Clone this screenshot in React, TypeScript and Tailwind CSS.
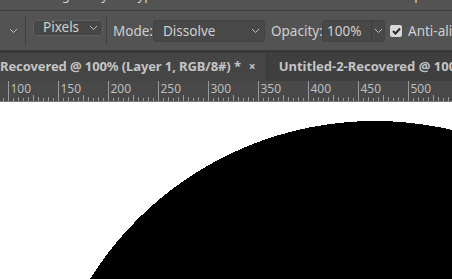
import React from "react";

const font = { fontFamily: '"Noto Sans", "DejaVu Sans", sans-serif' };

function Chevron({ className = "" }: { className?: string }) {
  return (
    <svg width="9" height="6" viewBox="0 0 9 6" className={className}>
      <path d="M1 1l3.5 3.5L8 1" fill="none" stroke="#bdbdbd" strokeWidth="1" />
    </svg>
  );
}

function Ruler() {
  const ticks: React.ReactNode[] = [];
  const labels: React.ReactNode[] = [];
  for (let v = 90; v <= 545; v += 5) {
    const x = v - 92 + 0.5;
    let h = 3;
    if (v % 50 === 0) h = 20;
    else if (v % 25 === 0) h = 6;
    else if (v % 10 === 0) h = 4;
    ticks.push(<line key={v} x1={x} x2={x} y1={20 - h} y2={20} stroke="#9a9a9a" strokeWidth="1" />);
    if (v % 50 === 0) {
      labels.push(
        <text key={"t" + v} x={x + 2} y={12} fill="#bdbdbd" fontSize="12" fontFamily='"Noto Sans", sans-serif'>
          {v}
        </text>
      );
    }
  }
  return (
    <svg width="452" height="20" className="block">
      {ticks}
      {labels}
    </svg>
  );
}

export default function App() {
  return (
    <div className="w-[452px] h-[279px] overflow-hidden bg-[#535353] flex flex-col" style={font}>
      {/* menu bar, cut off at the top */}
      <div className="h-[11px] shrink-0 overflow-hidden relative bg-[#535353] border-b border-[#3e3e3e]">
        <div className="absolute top-[-13px] left-[38px] flex gap-[10px] text-[13px] leading-[16px] text-[#d0d0d0]">
          <span>Image</span>
          <span>Layer</span>
          <span>Type</span>
        </div>
        <div className="absolute top-[-13px] left-[394px] text-[13px] leading-[16px] text-[#d0d0d0]">
          Help
        </div>
      </div>

      {/* options bar */}
      <div className="h-[39px] shrink-0 flex items-start pt-[9px] text-[13.5px] text-[#cfcfcf] overflow-hidden">
        <div className="w-[25px] shrink-0 h-[22px] flex items-center justify-center pl-[1px]">
          <Chevron />
        </div>
        <div className="w-px shrink-0 h-[29px] -mt-[4px] bg-[#3f3f3f]" />
        <div className="ml-[7px] shrink-0 w-[70px] h-[16px] rounded-[4px] bg-[#474747] border border-[#5e5e5e] flex items-center justify-between pl-[9px] pr-[4px]">
          <span className="leading-none">Pixels</span>
          <Chevron />
        </div>
        <div className="ml-[3px] shrink-0 w-px h-[29px] -mt-[4px] bg-[#3f3f3f]" />
        <span className="ml-[6px] shrink-0 w-[40px] h-[22px] leading-[22px]">Mode:</span>
        <div className="w-[112px] shrink-0 h-[22px] rounded-[3px] bg-[#484848] border border-[#424242] flex items-center justify-between pl-[9px] pr-[4px]">
          <span>Dissolve</span>
          <Chevron />
        </div>
        <span className="ml-[6px] shrink-0 w-[51px] h-[22px] leading-[22px]">Opacity:</span>
        <div className="w-[63px] shrink-0 h-[22px] rounded-[3px] bg-[#484848] border border-[#424242] flex items-center">
          <span className="pl-[4px] w-[48px]">100%</span>
          <div className="w-px h-full bg-[#3c3c3c]" />
          <div className="flex-1 flex justify-center">
            <Chevron />
          </div>
        </div>
        <div className="ml-[5px] shrink-0 mt-[5px] w-[12px] h-[12px] rounded-[2px] bg-[#d8d8d8] flex items-center justify-center">
          <svg width="9" height="8" viewBox="0 0 9 8">
            <path d="M1 4l2.5 2.5L8 1.5" fill="none" stroke="#2b2b2b" strokeWidth="2" />
          </svg>
        </div>
        <span className="ml-[6px] shrink-0 h-[22px] leading-[22px] whitespace-nowrap">Anti-alias</span>
      </div>

      {/* gap strip */}
      <div className="h-[3px] shrink-0 bg-[#383838]" />

      {/* tabs */}
      <div className="h-[28px] shrink-0 bg-[#454545] flex items-center text-[13px] font-bold text-[#c4c4c4] whitespace-nowrap overflow-hidden">
        <div className="h-full shrink-0 flex items-center bg-[#454545]">
          <span className="tracking-[-0.1px]">Recovered @ 100% (Layer 1, RGB/8#) *</span>
          <span className="ml-[8px] text-[12px]">×</span>
        </div>
        <div className="ml-[10px] shrink-0 w-px h-full bg-[#383838]" />
        <div className="h-full shrink-0 flex items-center bg-[#3f3f3f] pl-[12px] pr-[12px]">
          <span>Untitled-2-Recovered @ 100%</span>
        </div>
      </div>

      {/* ruler */}
      <div className="h-[20px] shrink-0 bg-[#494949] border-b border-[#7a7a7a] box-content">
        <Ruler />
      </div>

      {/* canvas */}
      <div className="flex-1 bg-white relative overflow-hidden">
        <svg width="452" height="178" className="block" shapeRendering="crispEdges">
          <circle cx="375" cy="355" r="336" fill="#000" />
        </svg>
      </div>
    </div>
  );
}
